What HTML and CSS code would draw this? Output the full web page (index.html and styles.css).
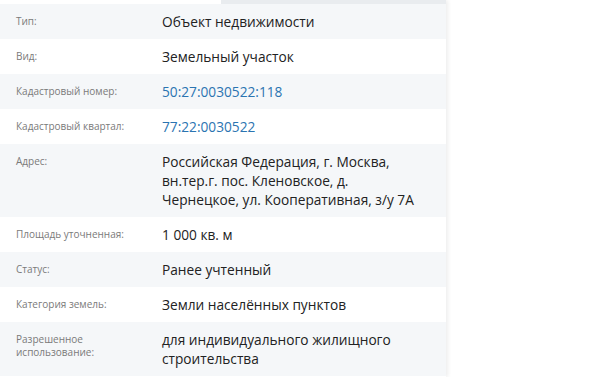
FILE: index.html
```html
<!DOCTYPE html>
<html lang="ru">
<head>
<meta charset="utf-8">
<link rel="stylesheet" href="styles.css">
</head>
<body>
<div class="panel">
  <div class="top"><div class="top-left"></div><div class="top-right"></div></div>
  <div class="row alt"><div class="label">Тип:</div><div class="value">Объект недвижимости</div></div>
  <div class="row"><div class="label">Вид:</div><div class="value">Земельный участок</div></div>
  <div class="row alt"><div class="label">Кадастровый номер:</div><div class="value link">50:27:0030522:118</div></div>
  <div class="row"><div class="label">Кадастровый квартал:</div><div class="value link">77:22:0030522</div></div>
  <div class="row alt"><div class="label">Адрес:</div><div class="value">Российская Федерация, г. Москва, вн.тер.г. пос. Кленовское, д. Чернецкое, ул. Кооперативная, з/у 7А</div></div>
  <div class="row"><div class="label">Площадь уточненная:</div><div class="value">1 000 кв. м</div></div>
  <div class="row alt"><div class="label">Статус:</div><div class="value">Ранее учтенный</div></div>
  <div class="row"><div class="label">Категория земель:</div><div class="value">Земли населённых пунктов</div></div>
  <div class="row alt"><div class="label">Разрешенное использование:</div><div class="value">для индивидуального жилищного строительства</div></div>
</div>
</body>
</html>
```
FILE: styles.css
```css
html, body {
  margin: 0;
  padding: 0;
  background: #fff;
}
body {
  font-family: "Open Sans", "Noto Sans", sans-serif;
  overflow: hidden;
}
.panel {
  width: 446px;
  background: #fff;
  box-shadow: 2px 0 4px rgba(0, 0, 0, 0.07);
  min-height: 377px;
}
.top {
  display: flex;
  height: 4px;
}
.top-left {
  width: 221px;
  background: #fff;
}
.top-right {
  flex: 1;
  background: #e9ecef;
}
.row {
  display: flex;
  align-items: flex-start;
  padding: 8px 0 8px 16px;
  background: #fff;
}
.row.alt {
  background: #f5f7f9;
}
.label {
  width: 114px;
  flex: none;
  margin-right: 32px;
  font-size: 10px;
  line-height: 13px;
  padding-top: 3px;
  color: #7a7a7a;
}
.value {
  flex: 1;
  font-size: 13.7px;
  line-height: 19px;
  color: #222;
  padding-right: 20px;
}
.value.link {
  color: #2b74b1;
}
```
